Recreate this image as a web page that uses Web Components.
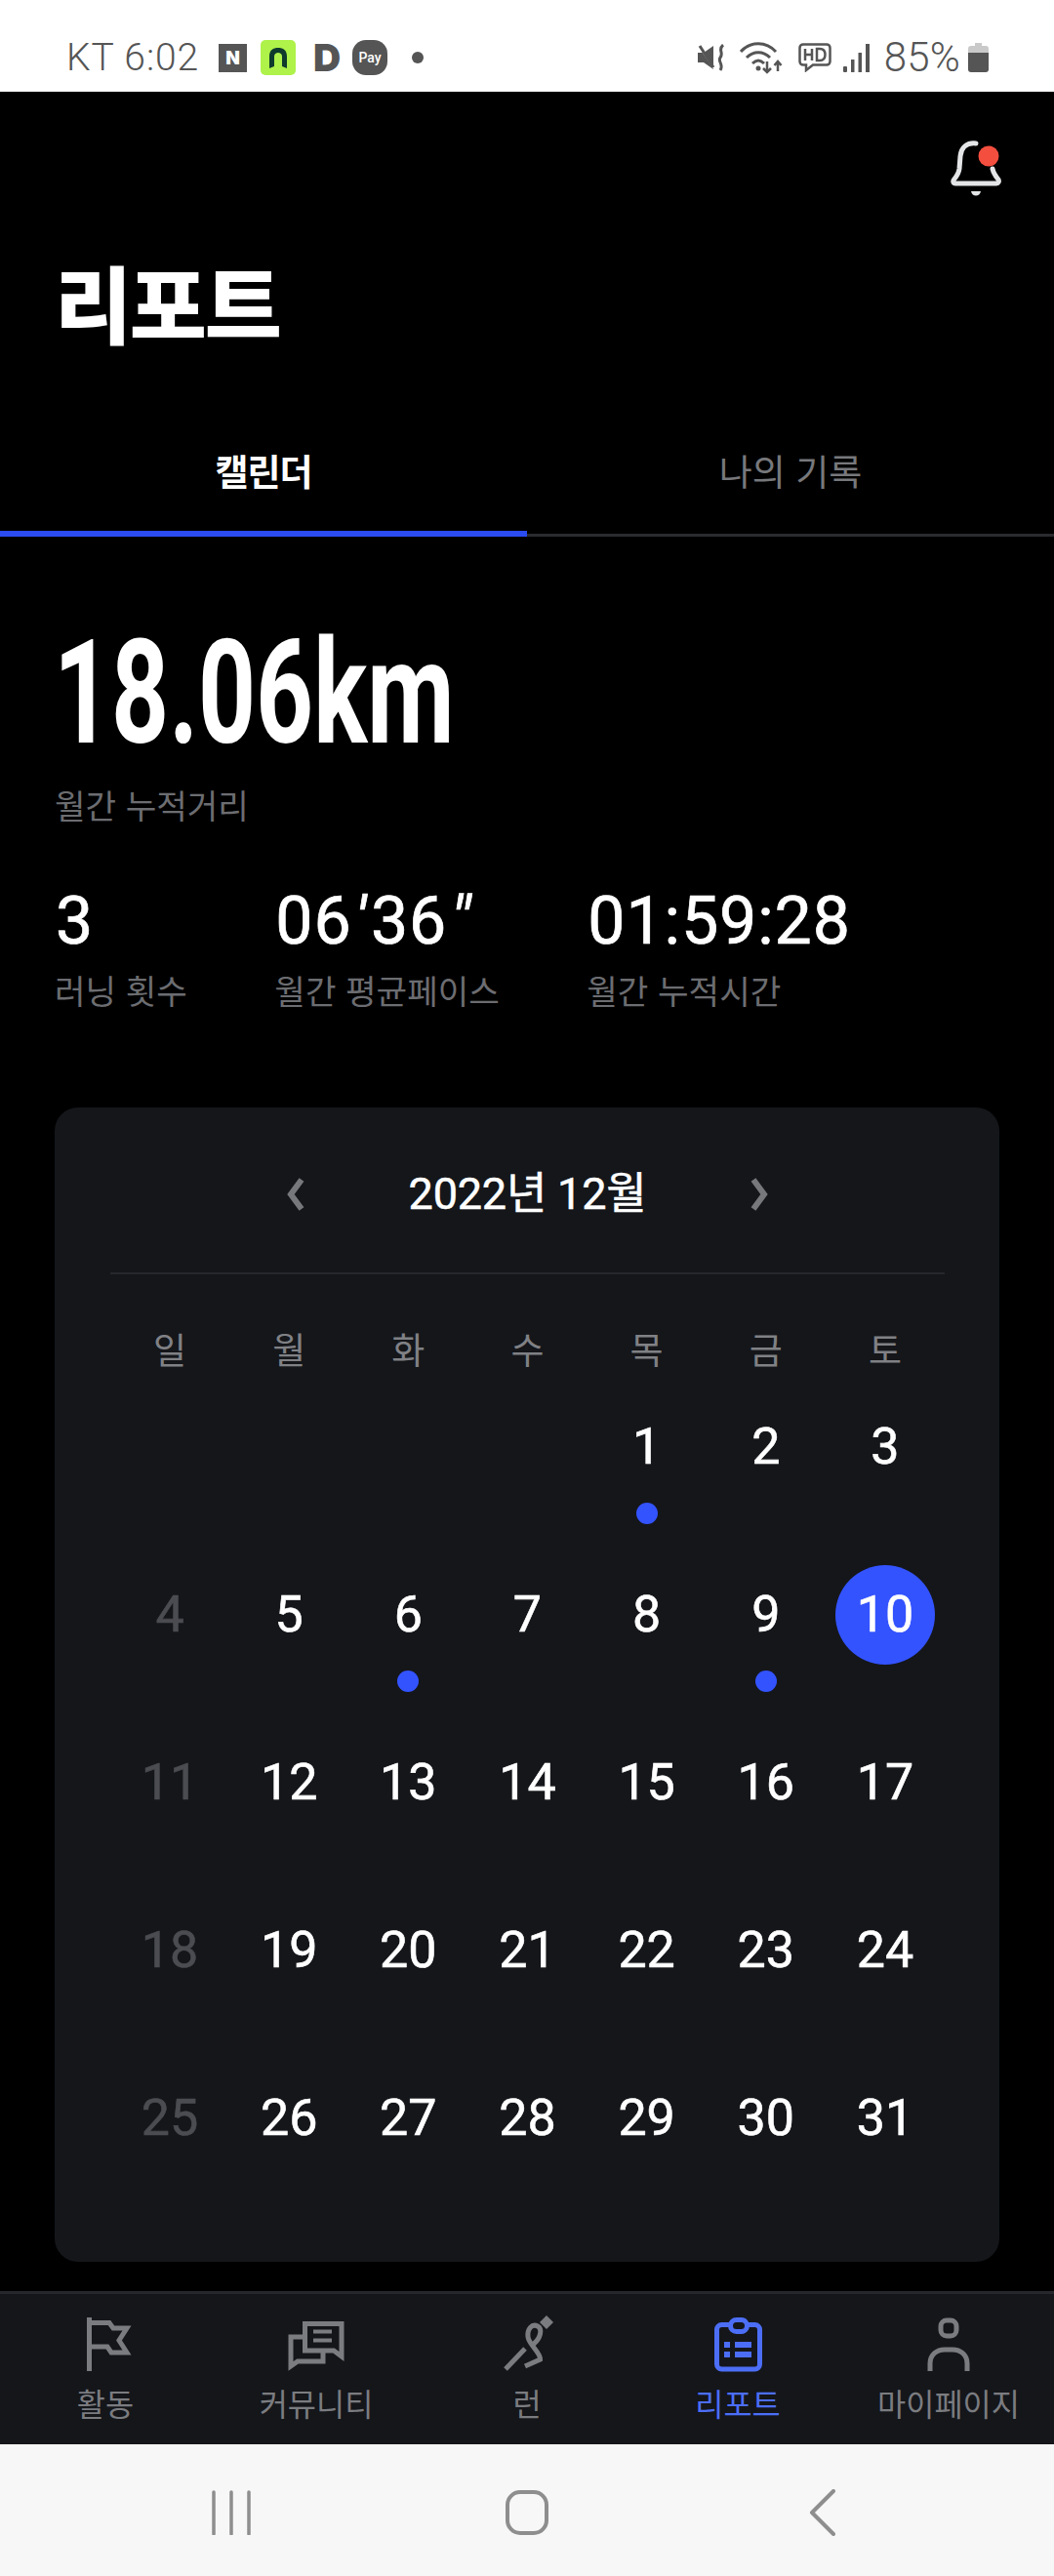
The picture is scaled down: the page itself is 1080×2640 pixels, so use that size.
<!DOCTYPE html>
<html lang="ko">
<head>
<meta charset="utf-8">
<title>리포트</title>
<style>
  html,body{margin:0;padding:0;background:#000;}
  body{width:1080px;height:2640px;overflow:hidden;font-family:"Noto Sans CJK KR","Noto Sans",sans-serif;}
</style>
</head>
<body>
<status-bar></status-bar>
<page-header>리포트</page-header>
<tab-bar>
  <tab-item active>캘린더</tab-item>
  <tab-item>나의 기록</tab-item>
</tab-bar>
<month-summary distance="18.06km" label="월간 누적거리">
  <stat-item value="3" label="러닝 횟수"></stat-item>
  <stat-item value="06'36&quot;" label="월간 평균페이스"></stat-item>
  <stat-item value="01:59:28" label="월간 누적시간"></stat-item>
</month-summary>
<run-calendar month="2022년 12월">
  <cal-day></cal-day><cal-day></cal-day><cal-day></cal-day><cal-day></cal-day>
  <cal-day dot>1</cal-day><cal-day>2</cal-day><cal-day>3</cal-day>
  <cal-day muted>4</cal-day><cal-day>5</cal-day><cal-day dot>6</cal-day><cal-day>7</cal-day>
  <cal-day>8</cal-day><cal-day dot>9</cal-day><cal-day active>10</cal-day>
  <cal-day muted>11</cal-day><cal-day>12</cal-day><cal-day>13</cal-day><cal-day>14</cal-day>
  <cal-day>15</cal-day><cal-day>16</cal-day><cal-day>17</cal-day>
  <cal-day muted>18</cal-day><cal-day>19</cal-day><cal-day>20</cal-day><cal-day>21</cal-day>
  <cal-day>22</cal-day><cal-day>23</cal-day><cal-day>24</cal-day>
  <cal-day muted>25</cal-day><cal-day>26</cal-day><cal-day>27</cal-day><cal-day>28</cal-day>
  <cal-day>29</cal-day><cal-day>30</cal-day><cal-day>31</cal-day>
</run-calendar>
<bottom-nav>
  <nav-item icon="flag">활동</nav-item>
  <nav-item icon="chat">커뮤니티</nav-item>
  <nav-item icon="run">런</nav-item>
  <nav-item icon="report" active>리포트</nav-item>
  <nav-item icon="user">마이페이지</nav-item>
</bottom-nav>
<system-nav></system-nav>

<script>
const KR='"Noto Sans CJK KR","Noto Sans",sans-serif';
const NUM='Roboto,"Noto Sans CJK KR",sans-serif';

class StatusBar extends HTMLElement{
  constructor(){
    super();
    this.attachShadow({mode:'open'}).innerHTML=`
    <style>
      :host{display:flex;align-items:center;height:94px;background:#fff;color:#555;padding:24px 67px 0 68px;box-sizing:border-box;font-family:Roboto,sans-serif;}
      .t{font-size:39px;font-weight:300;line-height:44px;letter-spacing:.9px;white-space:nowrap;}
      .n{width:29px;height:29px;background:#555;color:#fff;font:900 19px/29px Inter,sans-serif;text-align:center;margin-left:20px;}
      .g{width:36px;height:36px;background:#aef24a;border-radius:5px;margin-left:14px;display:block;}
      .d{width:27px;font:900 39px/36px Inter,sans-serif;color:#555;margin-left:18px;}
      .p{width:36px;height:36px;background:#555;color:#fff;border-radius:14px;font:500 14px/36px Roboto,sans-serif;text-align:center;margin-left:13px;}
      .o{width:12px;height:12px;border-radius:50%;background:#555;margin-left:25px;}
      .sp{flex:1;}
      svg{display:block;flex:none;}
    </style>
    <span class="t">KT 6:02</span>
    <span class="n">N</span>
    <svg class="g" viewBox="0 0 36 36"><path d="M9 29 V17 C9 10 13 8 18 8 C23 8 27 10 27 17 V29 L22 27 V17 C22 14 20 13 18 13 C16 13 14 14 14 17 V27 Z" fill="#0e3b2c"/></svg>
    <span class="d">D</span>
    <span class="p">Pay</span>
    <span class="o"></span>
    <span class="sp"></span>
    <svg width="29" height="28" viewBox="0 0 29 28"><path d="M0 9 H6 L16 2 V26 L6 19 H0 Z" fill="#555"/><path d="M0 0 L18 27" stroke="#fff" stroke-width="2"/><path d="M2 2 L16 24" stroke="#555" stroke-width="3"/><path d="M26 1 C20 6 27 9 23 14 C20 18 27 21 23 27" fill="none" stroke="#555" stroke-width="3"/></svg>
    <svg style="margin-left:14px" width="45" height="34" viewBox="0 0 45 34"><g fill="none" stroke="#555" stroke-width="3"><path d="M1 11 C11 0 27 0 37 11"/><path d="M7 17 C14 10 24 10 31 17"/><path d="M13 23 C17 19 21 19 25 23"/><path d="M28 21 V32 M24 28 L28 32 L32 28" stroke-width="2.5"/><path d="M39 31 V21 M35.500 25 L39 21 L42.500 25" stroke-width="2.500"/></g><circle cx="19" cy="28" r="2.500" fill="#555"/></svg>
    <svg style="margin-left:15px" width="34" height="30" viewBox="0 0 34 30"><path d="M5 1.500 H29 C31 1.500 32.500 3 32.500 5 V19 C32.500 21 31 22.500 29 22.500 H15 L8 28 V22.500 H5 C3 22.500 1.500 21 1.500 19 V5 C1.500 3 3 1.500 5 1.500 Z" fill="none" stroke="#555" stroke-width="2.500"/><path d="M7 6 V18 M14 6 V18 M7 12 H14" stroke="#555" stroke-width="2.500" fill="none"/><path d="M19 6 V18 H22 C26 18 27.500 15 27.500 12 C27.500 9 26 6 22 6 Z" stroke="#555" stroke-width="2.500" fill="none"/></svg>
    <svg style="margin-left:12px" width="27" height="29" viewBox="0 0 27 29"><g fill="#555"><rect x="0" y="23" width="4" height="6" rx="1"/><rect x="8" y="16" width="3.500" height="13"/><rect x="15.500" y="9" width="3.500" height="20"/><rect x="23" y="0" width="4" height="29"/></g></svg>
    <span class="t" style="margin-left:15px;font-size:42px;letter-spacing:.2px">85%</span>
    <svg style="margin-left:8px" width="21" height="30" viewBox="0 0 21 30"><path d="M7 0 H14 V3 H18 C20 3 21 4 21 6 V10 H0 V6 C0 4 1 3 3 3 H7 Z" fill="#c9c9c9"/><path d="M0 10 H21 V27 C21 29 20 30 18 30 H3 C1 30 0 29 0 27 Z" fill="#555"/></svg>`;
  }
}
customElements.define("status-bar",StatusBar);

class PageHeader extends HTMLElement{
  constructor(){
    super();
    this.attachShadow({mode:'open'}).innerHTML=`
    <style>
      :host{display:block;padding:46px 49px 0 0;color:#fff;font-family:${KR};}
      .bell{display:flex;justify-content:flex-end;}
      h1{margin:55px 0 0 56px;font-size:86px;line-height:100px;font-weight:900;letter-spacing:-2.3px;}
    </style>
    <div class="bell">
      <svg width="64" height="64" viewBox="0 0 64 64">
        <path d="M33 7 C24 6 18 11 17 20 L16 33 C15.500 37 13 41 10.500 44 C9 46 10 48 12 48 H54 C56 48 57 46 56 44 C53.500 41 51 38 50 33" fill="none" stroke="#e4e5e7" stroke-width="5" stroke-linecap="round"/>
        <path d="M28 56 H38 C37 62 29 62 28 56 Z" fill="#e4e5e7"/>
        <circle cx="46" cy="20" r="10.500" fill="#f44e3f"/>
      </svg>
    </div>
    <h1><slot></slot></h1>`;
  }
}
customElements.define("page-header",PageHeader);

class TabBar extends HTMLElement{
  constructor(){
    super();
    this.attachShadow({mode:'open'}).innerHTML=`
    <style>:host{display:flex;margin-top:100px;}</style><slot></slot>`;
  }
}
customElements.define("tab-bar",TabBar);

class TabItem extends HTMLElement{
  constructor(){
    super();
    this.attachShadow({mode:'open'}).innerHTML=`
    <style>
      :host{flex:1;display:block;box-sizing:border-box;height:91px;text-align:center;font-family:${KR};font-size:37px;line-height:47px;color:#77787c;border-bottom:3px solid #2a2b2f;}
      :host([active]){color:#fff;font-weight:700;border-bottom:6px solid #2a4cf0;letter-spacing:-1px;}
    </style><slot></slot>`;
  }
}
customElements.define("tab-item",TabItem);

class MonthSummary extends HTMLElement{
  constructor(){
    super();
    this.attachShadow({mode:'open'}).innerHTML=`
    <style>
      :host{display:block;padding:100px 0 0 56px;color:#fff;}
      .big{font-family:${NUM};font-size:149px;font-weight:700;line-height:120px;white-space:nowrap;height:120px;margin-left:-1px;}
      .big span{display:inline-block;transform:scaleX(.691);transform-origin:left center;}
      .lab{margin-top:33.5px;font-family:${KR};font-size:34.3px;line-height:40px;color:#6c6d71;}
      .row{display:flex;gap:89.5px;margin-top:70.5px;}
    </style>
    <div class="big"><span>${this.getAttribute("distance")}</span></div>
    <div class="lab">${this.getAttribute("label")}</div>
    <div class="row"><slot></slot></div>`;
  }
}
customElements.define("month-summary",MonthSummary);

class StatItem extends HTMLElement{
  constructor(){
    super();
    const value=this.getAttribute("value").replace(/['"]/g,m=>`<i>${m==='"'?'&quot;':m}</i>`);
    this.attachShadow({mode:'open'}).innerHTML=`
    <style>
      :host{display:block;}
      .v{font-family:${NUM};font-weight:400;-webkit-text-stroke:.7px #fff;font-size:68px;line-height:60px;color:#fff;letter-spacing:.9px;white-space:nowrap;width:0;margin-left:1px;}
      i{margin:0 4px 0 3px;}
      .l{margin-top:20px;font-family:${KR};font-size:34.3px;line-height:40px;color:#6c6d71;white-space:nowrap;}
    </style>
    <div class="v">${value}</div>
    <div class="l">${this.getAttribute("label")}</div>`;
  }
}
customElements.define("stat-item",StatItem);

class RunCalendar extends HTMLElement{
  constructor(){
    super();
    const days=["일","월","화","수","목","금","토"].map(d=>`<span>${d}</span>`).join("");
    this.attachShadow({mode:'open'}).innerHTML=`
    <style>
      :host{display:block;box-sizing:border-box;width:968px;height:1183px;margin:101px 0 0 56px;padding:59px 56px 0 57px;background:#14161a;border-radius:24px;}
      .head{display:flex;justify-content:center;align-items:center;gap:0;height:60px;}
      .m{width:419px;text-align:center;font-family:${NUM};font-size:45px;font-weight:400;-webkit-text-stroke:.5px #fff;color:#fff;line-height:60px;white-space:nowrap;letter-spacing:-.2px;}
      svg{display:block;}
      .hr{height:2px;background:#26272c;margin-top:50px;}
      .wk,.grid{display:grid;grid-template-columns:repeat(7,1fr);}
      .wk{margin-top:51px;height:50px;text-align:center;font-family:${KR};font-size:37px;line-height:50px;color:#808185;}
      .grid{margin-top:25px;grid-auto-rows:172px;}
    </style>
    <div class="head">
      <svg width="60" height="40" viewBox="0 0 60 40"><path d="M38 5 L27 20 L38 35" fill="none" stroke="#77787c" stroke-width="6"/></svg>
      <div class="m">${this.getAttribute("month")}</div>
      <svg width="60" height="40" viewBox="0 0 60 40"><path d="M22 5 L33 20 L22 35" fill="none" stroke="#77787c" stroke-width="6"/></svg>
    </div>
    <div class="hr"></div>
    <div class="wk">${days}</div>
    <div class="grid"><slot></slot></div>`;
  }
}
customElements.define("run-calendar",RunCalendar);

class CalDay extends HTMLElement{
  constructor(){
    super();
    this.attachShadow({mode:'open'}).innerHTML=`
    <style>
      :host{display:flex;flex-direction:column;align-items:center;font-family:${NUM};font-size:52px;font-weight:400;color:#fff;-webkit-text-stroke:.6px currentColor;}
      :host([muted]){color:#4b4c51;}
      .n{width:102px;height:102px;border-radius:50%;display:flex;align-items:center;justify-content:center;line-height:102px;}
      :host([active]) .n{background:#3353ff;}
      .dot{display:none;width:22px;height:22px;border-radius:50%;background:#3353ff;margin-top:6px;}
      :host([dot]) .dot{display:block;}
    </style>
    <div class="n"><slot></slot></div><div class="dot"></div>`;
  }
}
customElements.define("cal-day",CalDay);

class BottomNav extends HTMLElement{
  constructor(){
    super();
    this.attachShadow({mode:'open'}).innerHTML=`
    <style>:host{display:grid;grid-template-columns:repeat(5,216px);box-sizing:border-box;height:157px;margin-top:30px;background:#14161a;border-top:3px solid #26272c;}</style><slot></slot>`;
  }
}
customElements.define("bottom-nav",BottomNav);

const NAV_ICONS={
  flag:`<path d="M15.500 59 V4"/><path d="M18 9.500 H36 L40 15 H54 L46 27.500 L54 40 H38 L34 34 H18"/>`,
  chat:`<path d="M20.500 10.500 H58 V44 L50 38 H20.500 Z"/><path d="M18 24 H6 V54 L13 49 H39 V40"/><path d="M29 18.500 H48 M29 27.500 H48" stroke-width="4"/>`,
  run:`<path d="M52 2 L59 9 L52 16 L45 9 Z" fill="#7b7c80" stroke="none"/><path d="M10 57 L30 36"/><path d="M39 31 C46 25 48 16 43 13 C37 10 32 16 33 24 C34 32 46 40 45.500 47 L30 54"/>`,
  report:`<rect x="10.500" y="11.500" width="44" height="45.500" rx="5"/><rect x="24.500" y="6.500" width="17" height="12" rx="6" fill="#14161a"/><path d="M18 32 H24 M29 32 H46 M18 42 H24 M29 42 H46" stroke-width="6"/>`,
  user:`<rect x="24" y="7" width="16" height="16" rx="6"/><path d="M13 59 V51 C13 42 20 37 28 37 H36 C44 37 51 42 51 51 V59" />`
};

class NavItem extends HTMLElement{
  constructor(){
    super();
    this.attachShadow({mode:'open'}).innerHTML=`
    <style>
      :host{display:flex;flex-direction:column;align-items:center;padding-top:20px;color:#7b7c80;font-family:${KR};font-size:31.7px;line-height:38px;white-space:nowrap;}
      :host([active]){color:#4c6ef6;}
      svg{display:block;margin-bottom:8px;}
    </style>
    <svg width="64" height="64" viewBox="0 0 64 64" fill="none" stroke="currentColor" stroke-width="5">${NAV_ICONS[this.getAttribute("icon")]}</svg>
    <slot></slot>`;
  }
}
customElements.define("nav-item",NavItem);

class SystemNav extends HTMLElement{
  constructor(){
    super();
    this.attachShadow({mode:'open'}).innerHTML=`
    <style>
      :host{display:flex;justify-content:center;align-items:center;height:135px;background:#f7f7f7;padding-top:5px;box-sizing:border-box;}
      div{width:303px;display:flex;justify-content:center;}
    </style>
    <div><svg width="44" height="46" viewBox="0 0 44 46"><path d="M4 2 V45 M22 2 V45 M40 2 V45" stroke="#8e8e8e" stroke-width="3.500" stroke-linecap="round"/></svg></div>
    <div><svg width="46" height="46" viewBox="0 0 46 46"><rect x="3" y="2" width="40" height="42" rx="13" fill="none" stroke="#8e8e8e" stroke-width="4"/></svg></div>
    <div><svg width="28" height="48" viewBox="0 0 28 48"><path d="M25 2 L3 24 L25 46" fill="none" stroke="#8e8e8e" stroke-width="4" stroke-linecap="round" stroke-linejoin="round"/></svg></div>`;
  }
}
customElements.define("system-nav",SystemNav);
</script>
</body>
</html>
